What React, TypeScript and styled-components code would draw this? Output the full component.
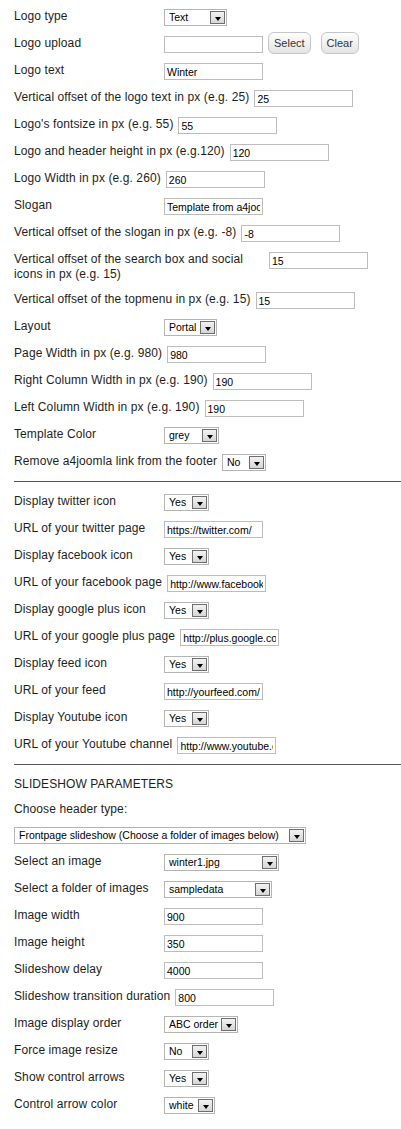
import React from 'react';
import styled, { createGlobalStyle } from 'styled-components';

const GlobalStyle = createGlobalStyle`
  html, body { margin: 0; padding: 0; background: #fff; }
  body {
    font-family: "Liberation Sans", Arial, sans-serif;
    color: #1e1e1e;
    overflow-x: hidden;
  }
`;

const Form = styled.div`
  padding: 4px 0 0 14px;
`;

const Row = styled.div`
  display: flex;
  align-items: flex-start;
  padding: 5px 0;
`;

const Label = styled.div<{ $full?: boolean }>`
  flex: 0 0 auto;
  min-width: 145px;
  max-width: ${(p) => (p.$full ? 'none' : '250px')};
  padding-right: 5px;
  font-size: 12px;
  line-height: 15px;
  letter-spacing: 0.1px;
  color: #1e1e1e;
`;

const Controls = styled.div`
  display: flex;
  align-items: flex-end;
  height: 17px;
`;

const TextInput = styled.input`
  box-sizing: border-box;
  width: 99px;
  height: 17px;
  margin: 0;
  padding: 0 2px;
  border: 1px solid #bdbdbd;
  background: #fff;
  color: #000;
  font: 10.5px "Liberation Sans", Arial, sans-serif;
  outline: none;
`;

const Button = styled.button<{ $gap: number }>`
  box-sizing: border-box;
  height: 22px;
  margin: 0 0 -1px ${(p) => p.$gap}px;
  padding: 0 5px;
  border: 1px solid #c6c6c6;
  border-radius: 6px;
  background: linear-gradient(#fefefe, #e4e4e4);
  color: #333;
  font: 11px "Liberation Sans", Arial, sans-serif;
`;

const SelectBox = styled.div<{ $w: number }>`
  box-sizing: border-box;
  display: flex;
  align-items: center;
  width: ${(p) => p.$w}px;
  height: 17px;
  border: 1px solid #b5b5b5;
  background: #fff;
  padding: 1px;
`;

const SelectValue = styled.span`
  flex: 1 1 auto;
  padding-left: 3px;
  font-size: 10.5px;
  line-height: 13px;
  color: #000;
  white-space: nowrap;
  overflow: hidden;
`;

const ArrowButton = styled.span`
  box-sizing: border-box;
  flex: 0 0 15px;
  height: 13px;
  border: 1px solid #6e6e6e;
  background: linear-gradient(#f2f2f2, #d6d6d6);
  display: flex;
  align-items: center;
  justify-content: center;
  &::after {
    content: '';
    width: 0;
    height: 0;
    margin-top: 2px;
    border-left: 3.5px solid transparent;
    border-right: 3.5px solid transparent;
    border-top: 4px solid #000;
  }
`;

const Divider = styled.hr`
  height: 0;
  margin: 5px 0 7px;
  border: 0;
  border-top: 1px solid #555;
`;

type Field =
  | { kind: 'text'; label: string; value: string }
  | { kind: 'select'; label: string; value: string; w: number }
  | { kind: 'upload'; label: string }
  | { kind: 'heading'; label: string }
  | { kind: 'wideSelect'; value: string; w: number };

const Select: React.FC<{ value: string; w: number }> = ({ value, w }) => (
  <SelectBox $w={w}>
    <SelectValue>{value}</SelectValue>
    <ArrowButton />
  </SelectBox>
);

const FieldRow: React.FC<{ f: Field }> = ({ f }) => {
  if (f.kind === 'heading') {
    return (
      <Row>
        <Label $full>{f.label}</Label>
      </Row>
    );
  }
  if (f.kind === 'wideSelect') {
    return (
      <Row>
        <Controls>
          <Select value={f.value} w={f.w} />
        </Controls>
      </Row>
    );
  }
  return (
    <Row>
      <Label>{f.label}</Label>
      <Controls>
        {f.kind === 'text' && <TextInput readOnly defaultValue={f.value} />}
        {f.kind === 'select' && <Select value={f.value} w={f.w} />}
        {f.kind === 'upload' && (
          <>
            <TextInput readOnly defaultValue="" />
            <Button $gap={5}>Select</Button>
            <Button $gap={10}>Clear</Button>
          </>
        )}
      </Controls>
    </Row>
  );
};

const general: Field[] = [
  { kind: 'select', label: 'Logo type', value: 'Text', w: 63 },
  { kind: 'upload', label: 'Logo upload' },
  { kind: 'text', label: 'Logo text', value: 'Winter' },
  { kind: 'text', label: 'Vertical offset of the logo text in px (e.g. 25)', value: '25' },
  { kind: 'text', label: "Logo's fontsize in px (e.g. 55)", value: '55' },
  { kind: 'text', label: 'Logo and header height in px (e.g.120)', value: '120' },
  { kind: 'text', label: 'Logo Width in px (e.g. 260)', value: '260' },
  { kind: 'text', label: 'Slogan', value: 'Template from a4joomla' },
  { kind: 'text', label: 'Vertical offset of the slogan in px (e.g. -8)', value: '-8' },
  { kind: 'text', label: 'Vertical offset of the search box and social icons in px (e.g. 15)', value: '15' },
  { kind: 'text', label: 'Vertical offset of the topmenu in px (e.g. 15)', value: '15' },
  { kind: 'select', label: 'Layout', value: 'Portal', w: 53 },
  { kind: 'text', label: 'Page Width in px (e.g. 980)', value: '980' },
  { kind: 'text', label: 'Right Column Width in px (e.g. 190)', value: '190' },
  { kind: 'text', label: 'Left Column Width in px (e.g. 190)', value: '190' },
  { kind: 'select', label: 'Template Color', value: 'grey', w: 55 },
  { kind: 'select', label: 'Remove a4joomla link from the footer', value: 'No', w: 44 },
];

const social: Field[] = [
  { kind: 'select', label: 'Display twitter icon', value: 'Yes', w: 45 },
  { kind: 'text', label: 'URL of your twitter page', value: 'https://twitter.com/' },
  { kind: 'select', label: 'Display facebook icon', value: 'Yes', w: 45 },
  { kind: 'text', label: 'URL of your facebook page', value: 'http://www.facebook.com/' },
  { kind: 'select', label: 'Display google plus icon', value: 'Yes', w: 45 },
  { kind: 'text', label: 'URL of your google plus page', value: 'http://plus.google.com/' },
  { kind: 'select', label: 'Display feed icon', value: 'Yes', w: 45 },
  { kind: 'text', label: 'URL of your feed', value: 'http://yourfeed.com/' },
  { kind: 'select', label: 'Display Youtube icon', value: 'Yes', w: 45 },
  { kind: 'text', label: 'URL of your Youtube channel', value: 'http://www.youtube.com/' },
];

const slideshow: Field[] = [
  { kind: 'heading', label: 'SLIDESHOW PARAMETERS' },
  { kind: 'heading', label: 'Choose header type:' },
  { kind: 'wideSelect', value: 'Frontpage slideshow (Choose a folder of images below)', w: 292 },
  { kind: 'select', label: 'Select an image', value: 'winter1.jpg', w: 115 },
  { kind: 'select', label: 'Select a folder of images', value: 'sampledata', w: 108 },
  { kind: 'text', label: 'Image width', value: '900' },
  { kind: 'text', label: 'Image height', value: '350' },
  { kind: 'text', label: 'Slideshow delay', value: '4000' },
  { kind: 'text', label: 'Slideshow transition duration', value: '800' },
  { kind: 'select', label: 'Image display order', value: 'ABC order', w: 74 },
  { kind: 'select', label: 'Force image resize', value: 'No', w: 45 },
  { kind: 'select', label: 'Show control arrows', value: 'Yes', w: 45 },
  { kind: 'select', label: 'Control arrow color', value: 'white', w: 51 },
];

export default function App() {
  return (
    <>
      <GlobalStyle />
      <Form>
        {general.map((f, i) => (
          <FieldRow key={`g${i}`} f={f} />
        ))}
        <Divider />
        {social.map((f, i) => (
          <FieldRow key={`s${i}`} f={f} />
        ))}
        <Divider />
        {slideshow.map((f, i) => (
          <FieldRow key={`h${i}`} f={f} />
        ))}
      </Form>
    </>
  );
}
